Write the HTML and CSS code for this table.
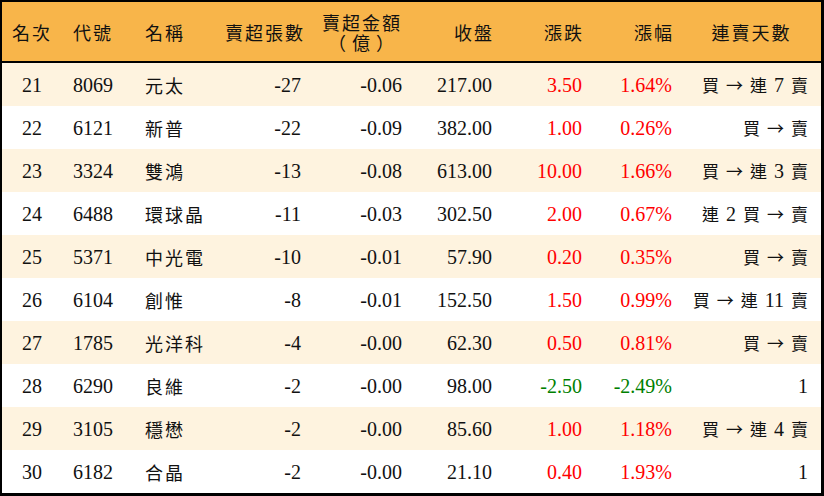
FILE: index.html
```html
<!DOCTYPE html>
<html lang="zh-Hant">
<head>
<meta charset="utf-8">
<link rel="stylesheet" href="styles.css">
</head>
<body>
<div class="board">
  <div class="row head">
    <div class="c c1 cj">名次</div>
    <div class="c c2 cj">代號</div>
    <div class="c c3 cj">名稱</div>
    <div class="c c4 cj">賣超張數</div>
    <div class="c c5 cj two"><span>賣超金額</span><span class="paren">（億）</span></div>
    <div class="c c6 cj">收盤</div>
    <div class="c c7 cj">漲跌</div>
    <div class="c c8 cj">漲幅</div>
    <div class="c c9 cj">連賣天數</div>
  </div>
  <div class="row odd">
    <div class="c c1">21</div><div class="c c2">8069</div><div class="c c3 cj">元太</div>
    <div class="c c4">-27</div><div class="c c5">-0.06</div><div class="c c6">217.00</div>
    <div class="c c7 up">3.50</div><div class="c c8 up">1.64%</div>
    <div class="c c9"><span class="k">買</span> <span class="k">→</span> <span class="k">連</span> 7 <span class="k">賣</span></div>
  </div>
  <div class="row">
    <div class="c c1">22</div><div class="c c2">6121</div><div class="c c3 cj">新普</div>
    <div class="c c4">-22</div><div class="c c5">-0.09</div><div class="c c6">382.00</div>
    <div class="c c7 up">1.00</div><div class="c c8 up">0.26%</div>
    <div class="c c9"><span class="k">買</span> <span class="k">→</span> <span class="k">賣</span></div>
  </div>
  <div class="row odd">
    <div class="c c1">23</div><div class="c c2">3324</div><div class="c c3 cj">雙鴻</div>
    <div class="c c4">-13</div><div class="c c5">-0.08</div><div class="c c6">613.00</div>
    <div class="c c7 up">10.00</div><div class="c c8 up">1.66%</div>
    <div class="c c9"><span class="k">買</span> <span class="k">→</span> <span class="k">連</span> 3 <span class="k">賣</span></div>
  </div>
  <div class="row">
    <div class="c c1">24</div><div class="c c2">6488</div><div class="c c3 cj">環球晶</div>
    <div class="c c4">-11</div><div class="c c5">-0.03</div><div class="c c6">302.50</div>
    <div class="c c7 up">2.00</div><div class="c c8 up">0.67%</div>
    <div class="c c9"><span class="k">連</span> 2 <span class="k">買</span> <span class="k">→</span> <span class="k">賣</span></div>
  </div>
  <div class="row odd">
    <div class="c c1">25</div><div class="c c2">5371</div><div class="c c3 cj">中光電</div>
    <div class="c c4">-10</div><div class="c c5">-0.01</div><div class="c c6">57.90</div>
    <div class="c c7 up">0.20</div><div class="c c8 up">0.35%</div>
    <div class="c c9"><span class="k">買</span> <span class="k">→</span> <span class="k">賣</span></div>
  </div>
  <div class="row">
    <div class="c c1">26</div><div class="c c2">6104</div><div class="c c3 cj">創惟</div>
    <div class="c c4">-8</div><div class="c c5">-0.01</div><div class="c c6">152.50</div>
    <div class="c c7 up">1.50</div><div class="c c8 up">0.99%</div>
    <div class="c c9"><span class="k">買</span> <span class="k">→</span> <span class="k">連</span> 11 <span class="k">賣</span></div>
  </div>
  <div class="row odd">
    <div class="c c1">27</div><div class="c c2">1785</div><div class="c c3 cj">光洋科</div>
    <div class="c c4">-4</div><div class="c c5">-0.00</div><div class="c c6">62.30</div>
    <div class="c c7 up">0.50</div><div class="c c8 up">0.81%</div>
    <div class="c c9"><span class="k">買</span> <span class="k">→</span> <span class="k">賣</span></div>
  </div>
  <div class="row">
    <div class="c c1">28</div><div class="c c2">6290</div><div class="c c3 cj">良維</div>
    <div class="c c4">-2</div><div class="c c5">-0.00</div><div class="c c6">98.00</div>
    <div class="c c7 down">-2.50</div><div class="c c8 down">-2.49%</div>
    <div class="c c9">1</div>
  </div>
  <div class="row odd">
    <div class="c c1">29</div><div class="c c2">3105</div><div class="c c3 cj">穩懋</div>
    <div class="c c4">-2</div><div class="c c5">-0.00</div><div class="c c6">85.60</div>
    <div class="c c7 up">1.00</div><div class="c c8 up">1.18%</div>
    <div class="c c9"><span class="k">買</span> <span class="k">→</span> <span class="k">連</span> 4 <span class="k">賣</span></div>
  </div>
  <div class="row">
    <div class="c c1">30</div><div class="c c2">6182</div><div class="c c3 cj">合晶</div>
    <div class="c c4">-2</div><div class="c c5">-0.00</div><div class="c c6">21.10</div>
    <div class="c c7 up">0.40</div><div class="c c8 up">1.93%</div>
    <div class="c c9">1</div>
  </div>
</div>
</body>
</html>
```

FILE: styles.css
```css
html, body {
  margin: 0;
  padding: 0;
  background: #ffffff;
}

.board {
  width: 824px;
  height: 496px;
  box-sizing: border-box;
  border-style: solid;
  border-color: #000;
  border-width: 2px 3px 3px 2px;
  font-family: "Liberation Serif", "Noto Sans CJK TC", serif;
  font-size: 20px;
  color: #111;
}

.row {
  display: grid;
  grid-template-columns: 60px 73px 80px 96px 101px 90px 90px 90px 139px;
  height: 43px;
  align-items: center;
  background: #ffffff;
}

.row.odd {
  background: #fef3df;
}

.row.head {
  height: 59px;
  background: #f8b54a;
  border-bottom: 2px solid #000;
}

.c {
  padding: 0 10px;
  text-align: right;
  white-space: nowrap;
  line-height: 22px;
}

.c1 { text-align: center; padding: 0; }
.c2 { text-align: left; padding-left: 11px; }
.c3 { text-align: left; padding-left: 10px; }
.c9 { padding-right: 13px; word-spacing: 2px; }
.head .c9 { text-align: center; padding: 0; word-spacing: 0; }

.cj {
  font-family: "Noto Sans CJK TC", sans-serif;
  font-size: 18px;
  letter-spacing: 2px;
  font-weight: 400;
}

.head .c4, .head .c6, .head .c7, .head .c8 {
  margin-right: -2px;
}

.two {
  display: flex;
  flex-direction: column;
  align-items: flex-end;
  line-height: 20px;
  padding-top: 1px;
}

.paren {
  letter-spacing: 6px;
  padding-right: 2px;
}

.k {
  font-family: "Noto Sans CJK TC", sans-serif;
  font-size: 17px;
}

.up { color: #ff0000; }
.down { color: #008000; }
```
